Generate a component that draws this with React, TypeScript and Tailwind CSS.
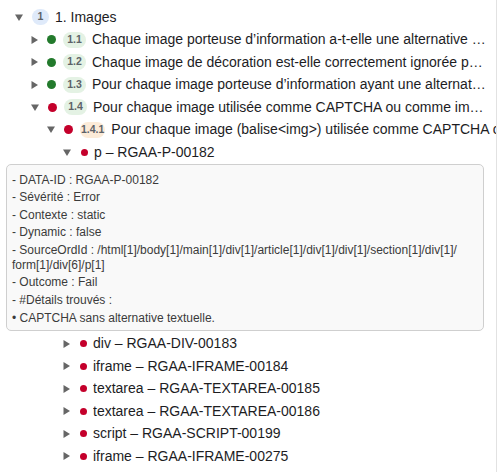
import React from 'react';

type Row = {
  level: number;
  open: boolean;
  dot?: 'green' | 'red';
  badge?: string;
  badgeTone?: 'blue' | 'green' | 'orange';
  text: string;
  clip?: boolean;
  small?: boolean;
};

const topRows: Row[] = [
  { level: 0, open: true, badge: '1', badgeTone: 'blue', text: '1. Images' },
  { level: 1, open: false, dot: 'green', badge: '1.1', badgeTone: 'green', text: 'Chaque image porteuse d’information a-t-elle une alternative textuelle ?' },
  { level: 1, open: false, dot: 'green', badge: '1.2', badgeTone: 'green', text: 'Chaque image de décoration est-elle correctement ignorée par les technologies d’assistance ?' },
  { level: 1, open: false, dot: 'green', badge: '1.3', badgeTone: 'green', text: 'Pour chaque image porteuse d’information ayant une alternative textuelle, cette alternative est-elle pertinente ?' },
  { level: 1, open: true, dot: 'red', badge: '1.4', badgeTone: 'green', text: 'Pour chaque image utilisée comme CAPTCHA ou comme image-test, ayant une alternative textuelle' },
  { level: 2, open: true, dot: 'red', badge: '1.4.1', badgeTone: 'orange', text: 'Pour chaque image (balise<img>) utilisée comme CAPTCHA ou comme image-test', clip: true },
  { level: 3, open: true, dot: 'red', small: true, text: 'p – RGAA-P-00182' },
];

const bottomRows: Row[] = [
  { level: 3, open: false, dot: 'red', small: true, text: 'div – RGAA-DIV-00183' },
  { level: 3, open: false, dot: 'red', small: true, text: 'iframe – RGAA-IFRAME-00184' },
  { level: 3, open: false, dot: 'red', small: true, text: 'textarea – RGAA-TEXTAREA-00185' },
  { level: 3, open: false, dot: 'red', small: true, text: 'textarea – RGAA-TEXTAREA-00186' },
  { level: 3, open: false, dot: 'red', small: true, text: 'script – RGAA-SCRIPT-00199' },
  { level: 3, open: false, dot: 'red', small: true, text: 'iframe – RGAA-IFRAME-00275' },
];

const details = [
  '- DATA-ID : RGAA-P-00182',
  '- Sévérité : Error',
  '- Contexte : static',
  '- Dynamic : false',
  '- SourceOrdId : /html[1]/body[1]/main[1]/div[1]/article[1]/div[1]/div[1]/section[1]/div[1]/\u200Bform[1]/div[6]/p[1]',
  '- Outcome : Fail',
  '- #Détails trouvés :',
  '• CAPTCHA sans alternative textuelle.',
];

const indent = ['pl-[15px]', 'pl-[31px]', 'pl-[47px]', 'pl-[63px]'];

function Caret({ open }: { open: boolean }) {
  return open ? (
    <svg width="8" height="7" viewBox="0 0 8 7" className="shrink-0">
      <path d="M0 0.5 H8 L4 7 Z" fill="#666666" />
    </svg>
  ) : (
    <svg width="7" height="8" viewBox="0 0 7 8" className="shrink-0">
      <path d="M0.5 0 L7 4 L0.5 8 Z" fill="#666666" />
    </svg>
  );
}

function TreeRow({ row }: { row: Row }) {
  const badgeBg =
    row.badgeTone === 'blue' ? 'bg-[#dfeafa]' : row.badgeTone === 'orange' ? 'bg-[#fcebd8]' : 'bg-[#e4f2e4]';
  return (
    <div className={`flex h-[22.5px] items-center whitespace-nowrap ${indent[row.level]} ${row.clip ? '' : 'pr-[8px]'}`}>
      <Caret open={row.open} />
      {row.dot && (
        <span
          className={`shrink-0 rounded-full ${row.small ? 'ml-[10px] h-[7px] w-[7px]' : 'ml-[9px] h-[9px] w-[9px]'} ${
            row.dot === 'green' ? 'bg-[#237a2c]' : 'bg-[#c4002b]'
          }`}
        />
      )}
      {row.badge && (
        <span
          className={`shrink-0 rounded-full ${badgeBg} ${
            row.dot ? 'ml-[7px] min-w-[23px]' : 'ml-[9px] min-w-[17px]'
          } flex h-[16px] items-center justify-center px-[1px] text-[10.5px] font-bold text-[#5c6268]`}
        >
          {row.badge}
        </span>
      )}
      <span
        className={`ml-[6px] min-w-0 flex-1 overflow-hidden text-[14px] text-[#1d1d1f] ${row.clip ? '' : 'text-ellipsis'}`}
      >
        {row.text}
      </span>
    </div>
  );
}

export default function App() {
  return (
    <div
      className="h-[472px] w-[498px] overflow-hidden bg-white"
      style={{ fontFamily: '"Liberation Sans", Arial, sans-serif' }}
    >
      <div className="h-full w-[497px] overflow-hidden border-r border-[#e2e2e2] pt-[6px]">
        {topRows.map((r, i) => (
          <TreeRow key={i} row={r} />
        ))}
        <div className="mb-[2px] ml-[6px] mr-[12px] rounded-[5px] border border-[#cfcfcf] bg-[#f9f9f9] px-[5px] pb-[4px] pt-[8px]">
          <div className="flex flex-col gap-[2.6px] text-[12px] leading-[15px] text-[#3b3b3b]">
            {details.map((d) => (
              <div key={d}>{d}</div>
            ))}
          </div>
        </div>
        {bottomRows.map((r, i) => (
          <TreeRow key={i} row={r} />
        ))}
      </div>
    </div>
  );
}
